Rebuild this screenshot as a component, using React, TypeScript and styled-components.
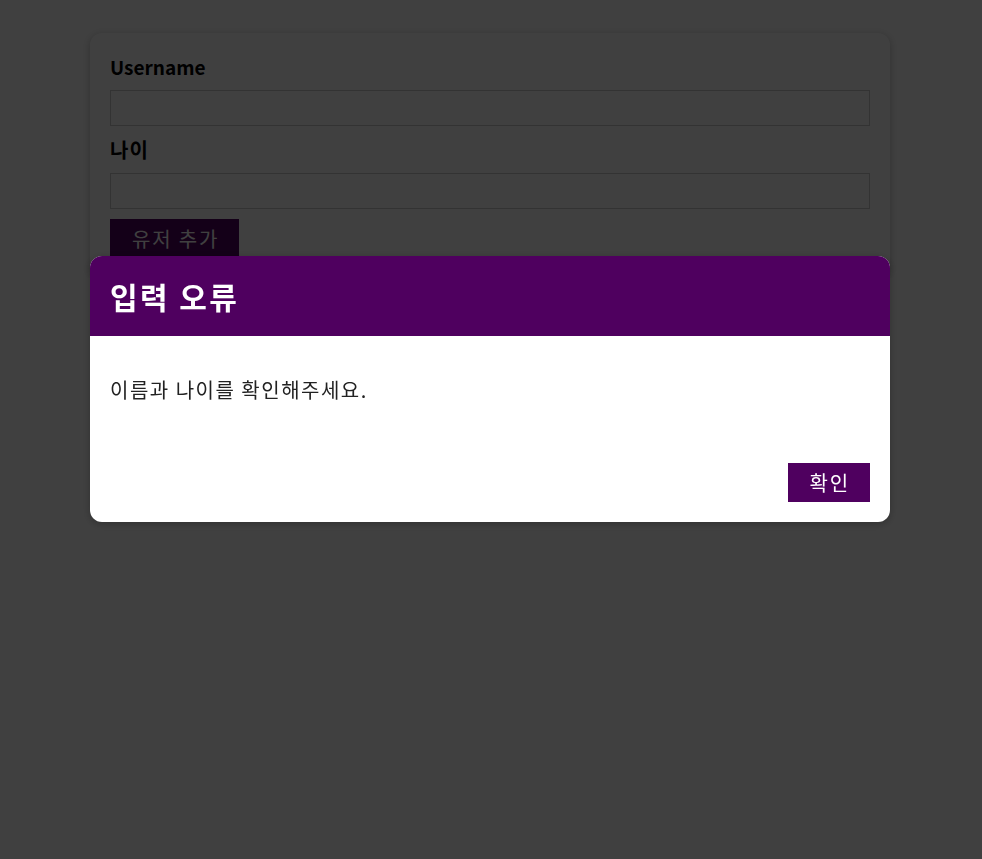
import React from "react";
import styled, { createGlobalStyle } from "styled-components";

const Global = createGlobalStyle`
  html, body {
    margin: 0;
    padding: 0;
    background: #ffffff;
    font-family: "Noto Sans CJK KR", "Noto Sans", sans-serif;
  }
  * { box-sizing: border-box; }
`;

const Card = styled.div`
  background: #ffffff;
  box-shadow: 0 2px 8px rgba(0, 0, 0, 0.26);
  border-radius: 12px;
`;

const FormCard = styled(Card)`
  width: 800px;
  margin: 33px 0 0 calc(50% - 401px);
  padding: 20px;
`;

const Label = styled.label<{ $ko?: boolean }>`
  display: block;
  font-weight: bold;
  font-size: ${(p) => (p.$ko ? "20px" : "19px")};
  letter-spacing: ${(p) => (p.$ko ? "0.05em" : "0")};
  line-height: 27px;
  margin-bottom: 10px;
  color: #000;
`;

const Input = styled.input`
  display: block;
  width: 100%;
  height: 36px;
  font: inherit;
  border: 1px solid #ccc;
  padding: 3px;
  margin: 0 0 10px;
`;

const Button = styled.button`
  font-family: inherit;
  font-size: 20px;
  line-height: 27px;
  letter-spacing: 0.09em;
  border: 1px solid #4f005f;
  background: #4f005f;
  color: #ffffff;
  padding: 5px 19px 5px 21px;
  cursor: pointer;
`;

const Backdrop = styled.div`
  position: fixed;
  inset: 0;
  z-index: 10;
  background: rgba(0, 0, 0, 0.75);
`;

const Modal = styled(Card)`
  position: fixed;
  top: 256px;
  left: calc(50% - 401px);
  width: 800px;
  z-index: 100;
  overflow: hidden;
`;

const Header = styled.header`
  background: #4f005f;
  padding: 20px;
`;

const Title = styled.h2`
  margin: 0;
  color: #ffffff;
  font-size: 30px;
  line-height: 40px;
  letter-spacing: 0.08em;
  font-weight: bold;
`;

const Content = styled.div`
  padding: 20px;
`;

const Message = styled.p`
  margin: 20px 0;
  font-size: 20px;
  line-height: 27px;
  letter-spacing: 0.075em;
  color: #222;
`;

const Actions = styled.footer`
  padding: 20px;
  display: flex;
  justify-content: flex-end;
`;

export default function App() {
  return (
    <>
      <Global />
      <FormCard>
        <form onSubmit={(e) => e.preventDefault()}>
          <Label htmlFor="username">Username</Label>
          <Input id="username" type="text" />
          <Label htmlFor="age" $ko>
            나이
          </Label>
          <Input id="age" type="number" />
          <Button type="submit">유저 추가</Button>
        </form>
      </FormCard>
      <Backdrop />
      <Modal>
        <Header>
          <Title>입력 오류</Title>
        </Header>
        <Content>
          <Message>이름과 나이를 확인해주세요.</Message>
        </Content>
        <Actions>
          <Button>확인</Button>
        </Actions>
      </Modal>
    </>
  );
}
